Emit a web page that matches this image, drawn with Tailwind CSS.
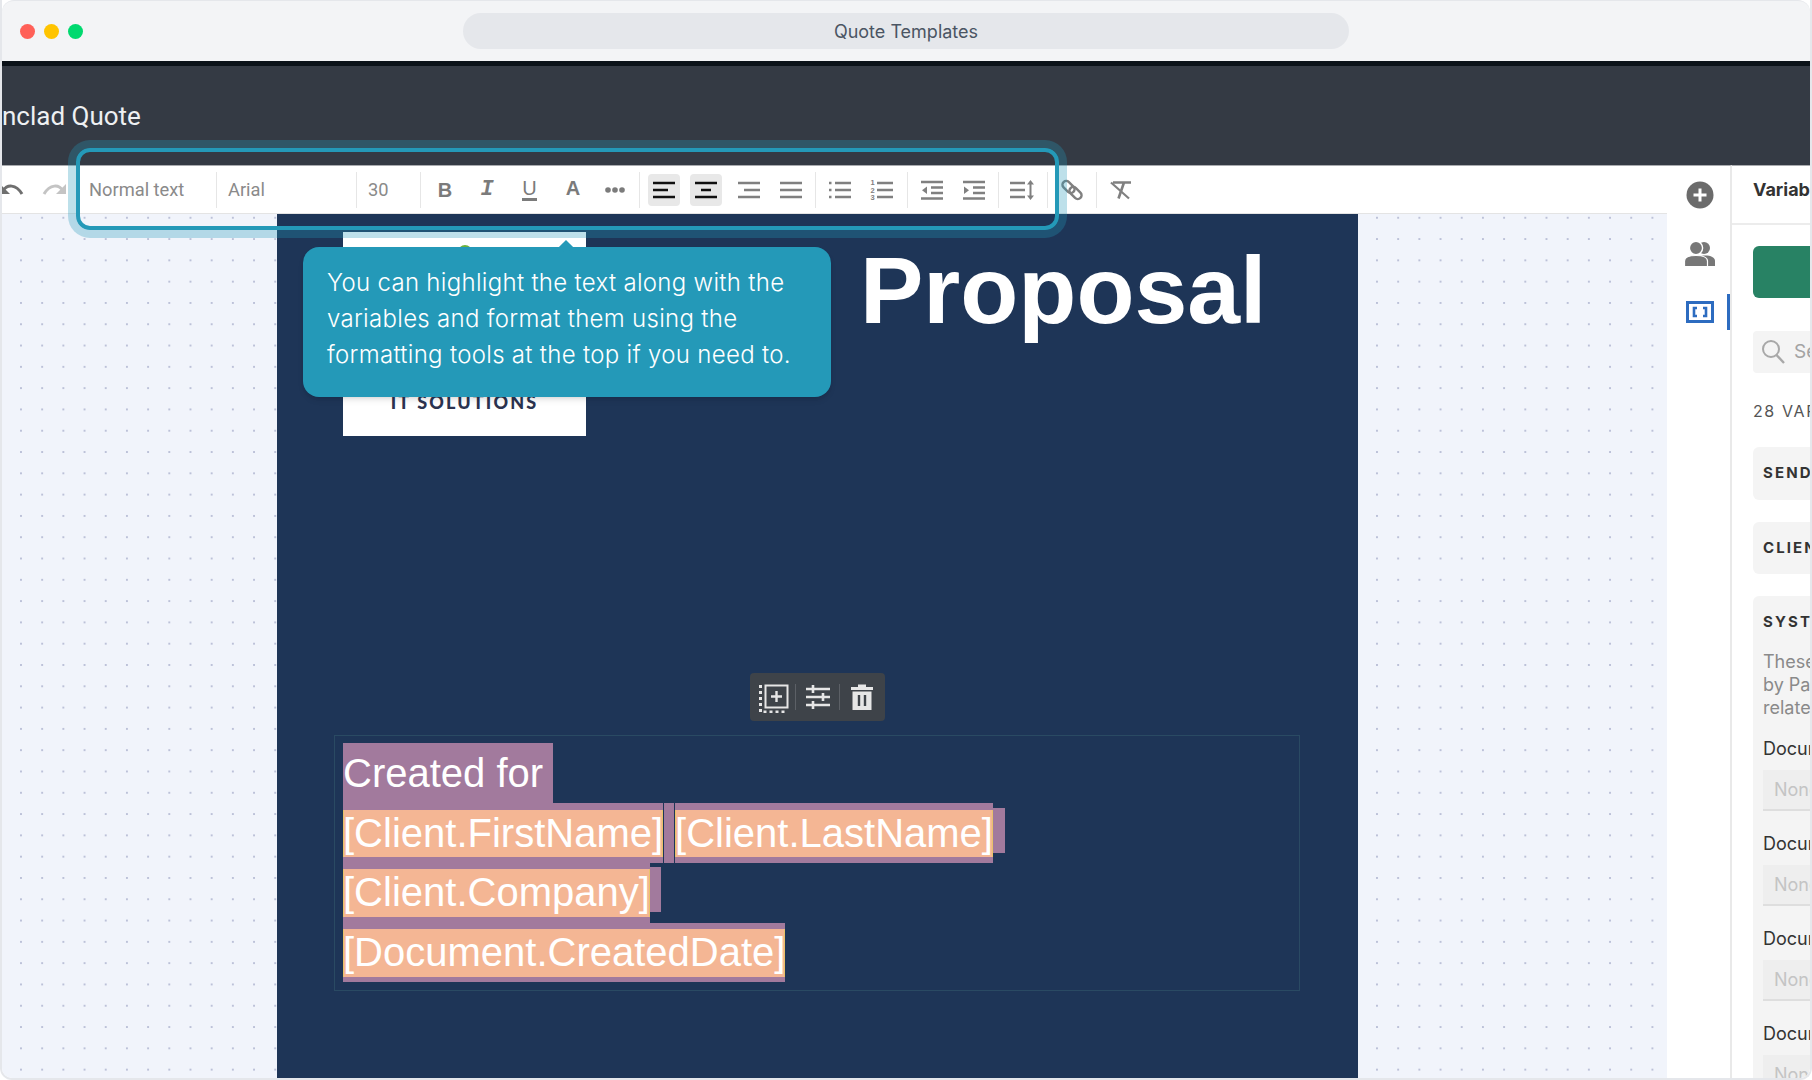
<!DOCTYPE html>
<html lang="en">
<head>
    <meta charset="UTF-8">
    <title>Quote Templates</title>
    <script src="https://cdn.jsdelivr.net/npm/@tailwindcss/browser@4"></script>
</head>
<body class="bg-white font-['Inter',sans-serif]">
<div class="relative flex h-[1080px] w-[1812px] flex-col overflow-hidden rounded-b-xl border-x-2 border-b-2 border-[#e5e7eb]">

    <!-- Window title bar -->
    <div class="flex h-[61px] shrink-0 items-center rounded-t-xl border-t border-[#e5e7eb] bg-[#f3f4f6]">
        <div class="ml-[18px] flex gap-[9px]">
            <span class="h-[15px] w-[15px] rounded-full bg-[#ff6058]"></span>
            <span class="h-[15px] w-[15px] rounded-full bg-[#ffc400]"></span>
            <span class="h-[15px] w-[15px] rounded-full bg-[#00d96f]"></span>
        </div>
        <div class="ml-[380px] flex h-[36px] w-[886px] items-center justify-center rounded-full bg-[#e5e7eb] text-[18px] text-[#4b5563]">Quote Templates</div>
    </div>
    <div class="h-[5px] shrink-0 bg-[#0b1219]"></div>

    <!-- App header -->
    <div class="flex h-[99px] shrink-0 items-start bg-[#343a44] pt-[33px] font-['Roboto',sans-serif] text-[26px] leading-[34px] text-[#eef0f2]">nclad Quote</div>

    <div class="flex min-h-0 flex-1">
        <div class="flex w-[1665px] shrink-0 flex-col">

            <!-- Editor toolbar -->
            <div class="flex h-[49px] shrink-0 items-center border-y border-t-[#a9abaf] border-b-[#e4e4e4] bg-white font-['Roboto',sans-serif] text-[18.3px] text-[#8a8a8a]">
                <button class="ml-[-11px] flex h-full w-[42px] items-center justify-center">
                    <svg width="26" height="16" viewBox="0 0 26 16" fill="none"><path d="M4 9 C8 2 17 2 23 12" stroke="#6f6f6f" stroke-width="3"/><path d="M1 2 V12 H11 Z" fill="#6f6f6f"/></svg>
                </button>
                <button class="flex h-full w-[41px] items-center justify-center">
                    <svg width="26" height="16" viewBox="0 0 26 16" fill="none"><path d="M22 9 C18 2 9 2 3 12" stroke="#c4c4c4" stroke-width="3"/><path d="M25 2 V12 H15 Z" fill="#c4c4c4"/></svg>
                </button>
                <div class="w-[142px] pl-[15px]">Normal text</div>
                <span class="h-[36px] w-px bg-[#e6e6e6]"></span>
                <div class="w-[139px] pl-[11px]">Arial</div>
                <span class="h-[36px] w-px bg-[#e6e6e6]"></span>
                <div class="w-[63px] pl-[11px]">30</div>
                <span class="h-[36px] w-px bg-[#e6e6e6]"></span>

                <button class="ml-[3px] w-[42px] text-center font-['Liberation_Sans',sans-serif] text-[20px] font-bold text-[#7b7b7b]">B</button>
                <button class="w-[42px] text-center font-['Liberation_Mono',monospace] text-[22px] font-bold italic text-[#7b7b7b]">I</button>
                <button class="flex w-[43px] justify-center font-['Liberation_Sans',sans-serif] text-[20px] text-[#7b7b7b]"><span class="border-b-[3px] border-[#7b7b7b] leading-[19px]">U</span></button>
                <button class="mb-[3px] w-[44px] text-center font-['Liberation_Sans',sans-serif] text-[20px] font-bold text-[#7b7b7b]">A</button>
                <button class="flex w-[40px] justify-center">
                    <svg width="22" height="8" viewBox="0 0 22 8" fill="#7b7b7b"><circle cx="4" cy="4" r="2.8"/><circle cx="11" cy="4" r="2.8"/><circle cx="18" cy="4" r="2.8"/></svg>
                </button>
                <span class="ml-[4px] h-[36px] w-px bg-[#e6e6e6]"></span>

                <button class="ml-[3px] flex h-[42px] w-[42px] items-center justify-center">
                    <span class="flex h-[32px] w-[32px] items-center justify-center rounded-sm bg-[#e8e8e8]">
                        <svg width="24" height="24" viewBox="0 0 24 24" stroke="#111" stroke-width="2.5"><path d="M1 5H23M1 12H16M1 19H23"/></svg>
                    </span>
                </button>
                <button class="flex h-[42px] w-[42px] items-center justify-center">
                    <span class="flex h-[32px] w-[32px] items-center justify-center rounded-sm bg-[#e8e8e8]">
                        <svg width="24" height="24" viewBox="0 0 24 24" stroke="#111" stroke-width="2.5"><path d="M1 5H23M7 12H17M1 19H23"/></svg>
                    </span>
                </button>
                <button class="flex w-[43px] justify-center">
                    <svg width="24" height="24" viewBox="0 0 24 24" stroke="#808080" stroke-width="2.5"><path d="M1 5H23M7 12H23M1 19H23"/></svg>
                </button>
                <button class="flex w-[42px] justify-center">
                    <svg width="24" height="24" viewBox="0 0 24 24" stroke="#808080" stroke-width="2.5"><path d="M1 5H23M1 12H23M1 19H23"/></svg>
                </button>
                <span class="ml-[3px] h-[36px] w-px bg-[#e6e6e6]"></span>

                <button class="ml-[3px] flex w-[42px] justify-center">
                    <svg width="24" height="24" viewBox="0 0 24 24" stroke="#808080" stroke-width="2.5"><path d="M7 5H23M7 12H23M7 19H23M1 5H3.5M1 12H3.5M1 19H3.5"/></svg>
                </button>
                <button class="flex w-[42px] justify-center">
                    <svg width="24" height="24" viewBox="0 0 24 24"><path d="M7 5H23M7 12H23M7 19H23" stroke="#808080" stroke-width="2.5"/><g fill="#808080" font-family="Liberation Sans" font-size="7.5" font-weight="700"><text x="0.5" y="7">1</text><text x="0.5" y="14.5">2</text><text x="0.5" y="22">3</text></g></svg>
                </button>
                <span class="ml-[4px] h-[36px] w-px bg-[#e6e6e6]"></span>

                <button class="ml-[2px] flex w-[43px] justify-center">
                    <svg width="24" height="24" viewBox="0 0 24 24"><path d="M1 4H23M11 9.5H23M11 15H23M1 20.5H23" stroke="#808080" stroke-width="2.5"/><path d="M7 8.5V16L2 12.2Z" fill="#808080"/></svg>
                </button>
                <button class="flex w-[42px] justify-center">
                    <svg width="24" height="24" viewBox="0 0 24 24"><path d="M1 4H23M11 9.5H23M11 15H23M1 20.5H23" stroke="#808080" stroke-width="2.5"/><path d="M2 8.5V16L7 12.2Z" fill="#808080"/></svg>
                </button>
                <span class="ml-[3px] h-[36px] w-px bg-[#e6e6e6]"></span>

                <button class="ml-[2px] flex w-[42px] justify-center">
                    <svg width="26" height="24" viewBox="0 0 26 24"><path d="M1 5H16M1 12H16M1 19H16" stroke="#808080" stroke-width="2.5"/><path d="M21.5 4V20" stroke="#808080" stroke-width="2"/><path d="M18 6.5L21.5 2L25 6.5ZM18 17.5L21.5 22L25 17.5Z" fill="#808080"/></svg>
                </button>
                <span class="ml-[4px] h-[36px] w-px bg-[#e6e6e6]"></span>

                <button class="ml-[3px] flex w-[42px] justify-center">
                    <svg width="24" height="24" viewBox="0 0 24 24" fill="none" stroke="#808080" stroke-width="2.4"><rect x="1.5" y="5.2" width="14" height="7.6" rx="3.8" transform="rotate(45 8.5 9)"/><rect x="8.5" y="11.2" width="14" height="7.6" rx="3.8" transform="rotate(45 15.5 15)"/></svg>
                </button>
                <span class="ml-[3px] h-[36px] w-px bg-[#e6e6e6]"></span>

                <button class="ml-[2px] flex w-[42px] justify-center">
                    <svg width="24" height="24" viewBox="0 0 24 24" fill="none" stroke="#808080" stroke-width="2.6"><path d="M5 4.5H23M16 4.5L10.5 20.5"/><path d="M3 4.5L21 20.5" stroke-width="2.2"/></svg>
                </button>
            </div>

            <!-- Dotted canvas with the document page -->
            <div class="min-h-0 flex-1 bg-[#f1f4fb] bg-[radial-gradient(circle,#bcc1d8_1.2px,transparent_1.4px)] bg-[length:21.2px_21.3px] bg-[position:8.4px_-6.9px] pl-[275px]">
                <div class="flex h-full w-[1081px] flex-col overflow-hidden bg-[#1e3557]">
                    <div class="flex items-start pl-[66px] pt-[18px]">
                        <div class="flex h-[204px] w-[243px] flex-col items-center justify-between bg-white pb-[23px] pt-[13px]">
                            <span class="h-[16px] w-[14px] rounded-full bg-[#6cb33f]"></span>
                            <span class="font-['Lato',sans-serif] text-[18px] leading-[22px] font-black tracking-[0.12em] text-[#2b3350]">IT SOLUTIONS</span>
                        </div>
                        <h1 class="ml-[274px] mt-[11px] font-['Liberation_Sans',sans-serif] text-[95px] leading-[94px] font-bold whitespace-nowrap text-white">Proposal</h1>
                    </div>

                    <!-- Block actions -->
                    <div class="mx-auto mt-[237px] flex h-[48px] w-[135px] shrink-0 items-center justify-center gap-[5.5px] rounded-sm bg-[#3e4349]">
                        <svg width="32" height="32" viewBox="0 0 32 32" fill="none"><rect x="7.5" y="4.5" width="22" height="22" stroke="#e6e6e6" stroke-width="2"/><path d="M18.5 10V21M13 15.5H24" stroke="#e6e6e6" stroke-width="2.4"/><path d="M2.5 4V31H29" stroke="#e6e6e6" stroke-width="3" stroke-dasharray="3 3"/></svg>
                        <span class="h-[26px] w-px bg-[#5c6066]"></span>
                        <svg width="32" height="32" viewBox="0 0 32 32" stroke="#e6e6e6" stroke-width="2.4"><path d="M4 8H28M4 16H28M4 24H28"/><path d="M11 4V12M21 12V20M11 20V28" stroke-width="2.6"/></svg>
                        <span class="h-[26px] w-px bg-[#5c6066]"></span>
                        <svg width="32" height="32" viewBox="0 0 32 32"><path d="M5 6H12V3.5H20V6H27V9H5ZM6.5 10.5H25.5V29H6.5Z" fill="#e6e6e6"/><path d="M13 14V25M19 14V25" stroke="#3e4349" stroke-width="2.4"/></svg>
                    </div>

                    <!-- Selected text block -->
                    <div class="ml-[57px] mt-[14px] h-[256px] w-[966px] shrink-0 border border-[#2a4a63] pl-[8px] pt-[7px] font-['Liberation_Sans',sans-serif] text-[40px] whitespace-nowrap text-white">
                        <div class="h-[60px] w-[210px] bg-[#a27a9d] leading-[60px]">Created for</div>
                        <div class="flex">
                            <div class="h-[60px] bg-[#a27a9d] pt-[7px]">
                                <div class="h-[47px] bg-[#f4b694] leading-[47px] shadow-[inset_1px_0_#e8c36a,inset_-1px_0_#e8c36a]">[Client.FirstName]</div>
                            </div>
                            <div class="mx-px h-[60px] w-[10px] bg-[#a27a9d]"></div>
                            <div class="h-[60px] bg-[#a27a9d] pt-[7px]">
                                <div class="h-[47px] bg-[#f4b694] leading-[47px] shadow-[inset_1px_0_#e8c36a,inset_-1px_0_#e8c36a]">[Client.LastName]</div>
                            </div>
                            <div class="mt-[5px] h-[45px] w-[12px] bg-[#a27a9d]"></div>
                        </div>
                        <div class="flex">
                            <div class="h-[60px] bg-[#a27a9d] pt-[6px]">
                                <div class="h-[48px] bg-[#f4b694] leading-[47px] shadow-[inset_1px_0_#e8c36a,inset_-1px_0_#e8c36a]">[Client.Company]</div>
                            </div>
                            <div class="mt-[4px] h-[45px] w-[11px] bg-[#a27a9d]"></div>
                        </div>
                        <div class="h-[59px] w-fit bg-[#a27a9d] pt-[6px]">
                            <div class="h-[48px] bg-[#f4b694] leading-[47px] shadow-[inset_1px_0_#e8c36a,inset_-1px_0_#e8c36a]">[Document.CreatedDate]</div>
                        </div>
                    </div>
                </div>
            </div>
        </div>

        <!-- Icon rail -->
        <div class="relative flex w-[65px] shrink-0 flex-col items-center border-r-2 border-t border-[#e9e9e9] border-t-[#a9abaf] bg-white pl-[3px] pt-[15px]">
            <svg class="shrink-0" width="28" height="28" viewBox="0 0 28 28"><circle cx="14" cy="14" r="13.5" fill="#6b6b6b"/><path d="M14 7.5V20.5M7.5 14H20.5" stroke="#fff" stroke-width="3"/></svg>
            <svg class="mt-[32px] shrink-0" width="32" height="26" viewBox="0 0 32 26" fill="#777"><circle cx="20" cy="7" r="6"/><path d="M14 25V18C14 15.5 17 14.5 21 14.5C27 14.5 31 16.5 31 20V25Z"/><circle cx="12" cy="7" r="6.6" stroke="#fff" stroke-width="1.4"/><path d="M0.5 25.5V20C0.5 16.5 5 14.5 12 14.5S23.5 16.5 23.5 20V25.5Z" stroke="#fff" stroke-width="1.2"/></svg>
            <svg class="mt-[34px] shrink-0" width="28" height="22" viewBox="0 0 28 22" fill="none" stroke="#2d6cc0"><rect x="1.5" y="1.5" width="25" height="19" stroke-width="3"/><path d="M11 7H8V15H11M17 7H20V15H17" stroke-width="2.6"/></svg>
            <span class="absolute right-0 top-[128px] h-[36px] w-[3px] bg-[#2d6cc0]"></span>
        </div>

        <!-- Variables panel -->
        <div class="min-w-0 flex-1 overflow-hidden border-t border-t-[#a9abaf] bg-white">
            <div class="h-[59px] w-[300px] border-b-2 border-[#ececec] pl-[21px] pt-[12px] text-[18px] leading-[24px] font-bold whitespace-nowrap text-[#333]">Variables</div>
            <div class="w-[300px] pl-[21px] text-[#333]">
                <div class="mt-[21px] h-[52px] rounded-md bg-[#288264]"></div>
                <div class="mt-[33px] flex h-[42px] items-center rounded-sm bg-[#f4f4f4] pl-[8px] text-[19px] text-[#a3a3a3]">
                    <svg class="shrink-0" width="24" height="26" viewBox="0 0 24 26" fill="none" stroke="#a8a8a8"><circle cx="10" cy="10" r="8" stroke-width="2"/><path d="M15.5 16L23 24" stroke-width="2.4"/></svg>
                    <span class="ml-[9px]">Search</span>
                </div>
                <div class="mt-[28px] text-[16px] leading-[20px] tracking-[0.1em] text-[#555]">28 VARIABLES</div>
                <div class="mt-[26px] flex h-[53px] items-center rounded-md bg-[#f4f4f4] pl-[10px] text-[15px] font-bold tracking-[0.14em]">SENDER</div>
                <div class="mt-[22px] flex h-[52px] items-center rounded-md bg-[#f4f4f4] pl-[10px] text-[15px] font-bold tracking-[0.14em]">CLIENT</div>
                <div class="mt-[22px] rounded-md bg-[#f4f4f4] pl-[10px] pt-[16px]">
                    <div class="text-[15px] leading-[20px] font-bold tracking-[0.14em]">SYSTEM</div>
                    <div class="mt-[18px] text-[18px] leading-[23px] whitespace-nowrap text-[#8a8a8a]">These variables<br>by PandaDoc<br>related to</div>
                    <div class="mt-[18px] flex flex-col text-[18px] leading-[24px]">
                        <div class="h-[95px]">Document<div class="mt-[9px] flex h-[41px] items-center border-b-2 border-[#dedede] bg-[#eeeeee] pl-[11px] text-[#c4c4c4]">None</div></div>
                        <div class="h-[95px]">Document<div class="mt-[9px] flex h-[41px] items-center border-b-2 border-[#dedede] bg-[#eeeeee] pl-[11px] text-[#c4c4c4]">None</div></div>
                        <div class="h-[95px]">Document<div class="mt-[9px] flex h-[41px] items-center border-b-2 border-[#dedede] bg-[#eeeeee] pl-[11px] text-[#c4c4c4]">None</div></div>
                        <div class="h-[95px]">Document<div class="mt-[9px] flex h-[41px] items-center border-b-2 border-[#dedede] bg-[#eeeeee] pl-[11px] text-[#c4c4c4]">None</div></div>
                    </div>
                </div>
            </div>
        </div>
    </div>

    <!-- Tour highlight around the toolbar -->
    <div class="absolute left-[74px] top-[148px] h-[82px] w-[983px] rounded-[14px] border-4 border-[#2499b8] shadow-[0_0_0_8px_rgba(36,153,184,0.3)]"></div>

    <!-- Tour tooltip -->
    <div class="absolute left-[301px] top-[247px] h-[150px] w-[528px] rounded-2xl bg-[#2499b8] pl-[24px] pt-[18px] text-[24px] leading-[36px] font-light tracking-[0.3px] whitespace-nowrap text-white shadow-md">
        <span class="absolute left-[258px] top-[-5px] h-[10px] w-[10px] rotate-45 bg-[#2499b8]"></span>
        You can highlight the text along with the<br>variables and format them using the<br>formatting tools at the top if you need to.
    </div>
</div>
</body>
</html>
